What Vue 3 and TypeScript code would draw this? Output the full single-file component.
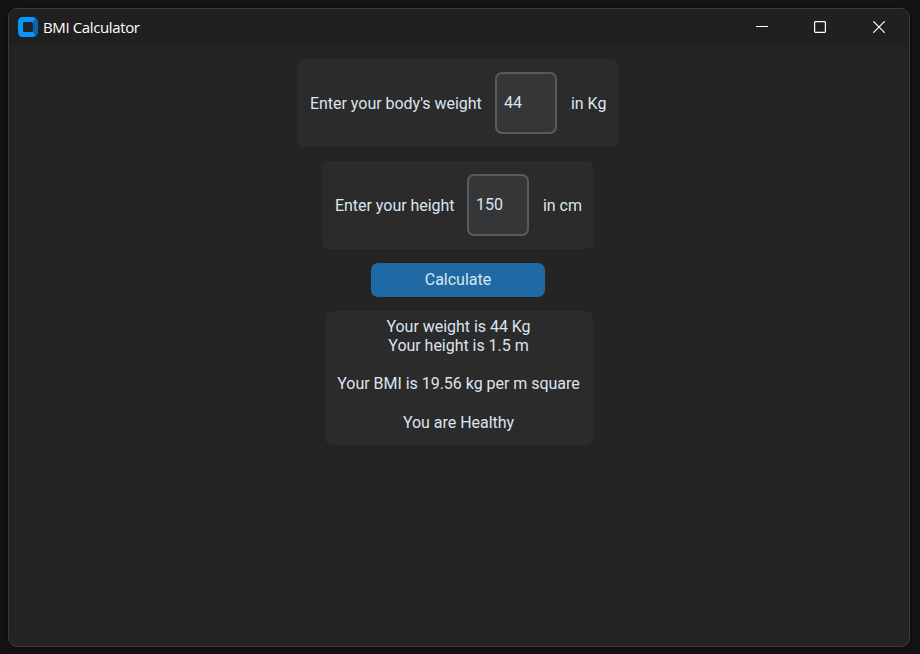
<script setup lang="ts">
import { computed, ref } from 'vue'

const weight = ref('44')
const height = ref('150')
const result = ref({ kg: 44, m: 1.5 })

const bmi = computed(() => (result.value.kg / result.value.m ** 2).toFixed(2))
const status = computed(() => {
  const value = Number(bmi.value)
  if (value < 18.5) return 'Underweight'
  return value < 25 ? 'Healthy' : 'Overweight'
})

function calculate(): void {
  result.value = { kg: Number(weight.value), m: Number(height.value) / 100 }
}
</script>

<template>
  <div class="desktop">
    <main class="window">
      <header class="titlebar">
        <svg class="logo" width="20" height="20" viewBox="0 0 20 20">
          <rect width="20" height="20" rx="5" fill="#0a63ae" />
          <path d="M5 0H15L17.5 1.5L15 5V15L17.5 18.5L15 20H5Q0 20 0 15V5Q0 0 5 0Z" fill="#0597fb" />
          <rect x="5" y="5" width="10" height="10" rx="1.5" fill="#212529" />
        </svg>
        <h1 class="title">BMI Calculator</h1>
        <div class="controls">
          <svg width="12" height="12" viewBox="0 0 12 12"><path d="M0 5.5H12" /></svg>
          <svg width="12" height="12" viewBox="0 0 12 12"><rect x=".6" y=".6" width="10.8" height="10.8" rx=".8" /></svg>
          <svg width="12" height="12" viewBox="0 0 12 12"><path d="M.3 .3L11.7 11.7M11.7 .3L.3 11.7" /></svg>
        </div>
      </header>
      <form class="content" @submit.prevent="calculate">
        <label class="card field weight">
          <span class="prompt">Enter your body's weight</span>
          <input v-model="weight" class="entry" type="text" />
          <span class="unit">in Kg</span>
        </label>
        <label class="card field height">
          <span class="prompt">Enter your height</span>
          <input v-model="height" class="entry" type="text" />
          <span class="unit">in cm</span>
        </label>
        <button class="calculate" type="submit">Calculate</button>
        <section class="card result">
          <p>Your weight is {{ result.kg }} Kg</p>
          <p>Your height is {{ result.m }} m</p>
          <p class="spaced">Your BMI is {{ bmi }} kg per m square</p>
          <p class="spaced last">You are {{ status }}</p>
        </section>
      </form>
    </main>
  </div>
</template>

<style>
body {
  background: #141414;
}
</style>

<style scoped>
* {
  box-sizing: border-box;
}
.desktop {
  height: 654px;
  padding: 8px 10px 7px 8px;
  background: #141414;
  overflow: hidden;
}
.window {
  height: 639px;
  border: 1px solid #3b3b3b;
  border-radius: 9px;
  background: #242424;
  overflow: hidden;
  box-shadow: 0 1px 8px #0c0c0c;
  color: #dce4ee;
  font: 16px/19px Roboto, sans-serif;
  letter-spacing: -0.03px;
}
.titlebar {
  display: flex;
  align-items: center;
  height: 37px;
  padding: 0 24px 1px 9px;
  background: #202020;
}
.logo {
  margin-right: 5px;
}
.title {
  margin: 0;
  color: #fff;
  font: 400 15px/20px "Open Sans", "Noto Sans", sans-serif;
  letter-spacing: -0.38px;
}
.controls {
  display: flex;
  margin-left: auto;
}
.controls svg {
  margin-left: 46px;
  fill: none;
  stroke: #fff;
  stroke-width: 1.2;
}
.controls svg:last-child {
  margin-left: 47px;
}
.content {
  display: flex;
  flex-direction: column;
  align-items: center;
  gap: 14px;
  padding: 13px 2px 0 0;
}
.card {
  border-radius: 7px;
  background: #2b2b2b;
}
.field {
  display: flex;
  align-items: center;
  height: 88px;
  padding: 0 12px 0 13px;
}
.weight {
  width: 322px;
}
.height {
  width: 272px;
}
.prompt {
  flex: 1;
  white-space: nowrap;
}
.unit {
  flex: none;
  width: 36px;
  white-space: nowrap;
}
.height .unit {
  width: 39px;
}
.entry {
  flex: none;
  width: 62px;
  height: 62px;
  margin-right: 14px;
  padding: 0 7px 2px;
  border: 2px solid #565b5e;
  border-radius: 7px;
  outline: none;
  background: #343638;
  color: #dce4ee;
  font: inherit;
}
.calculate {
  width: 174px;
  height: 34px;
  padding: 0 0 1px;
  border: 0;
  border-radius: 7px;
  background: #1f6aa5;
  color: #dce4ee;
  font: inherit;
}
.result {
  width: 268px;
  height: 134px;
  margin-left: 1px;
  padding-top: 6px;
  text-align: center;
}
.result p {
  margin: 0;
}
.result .spaced {
  margin-top: 19px;
}
.result .last {
  margin-top: 20px;
}
</style>
